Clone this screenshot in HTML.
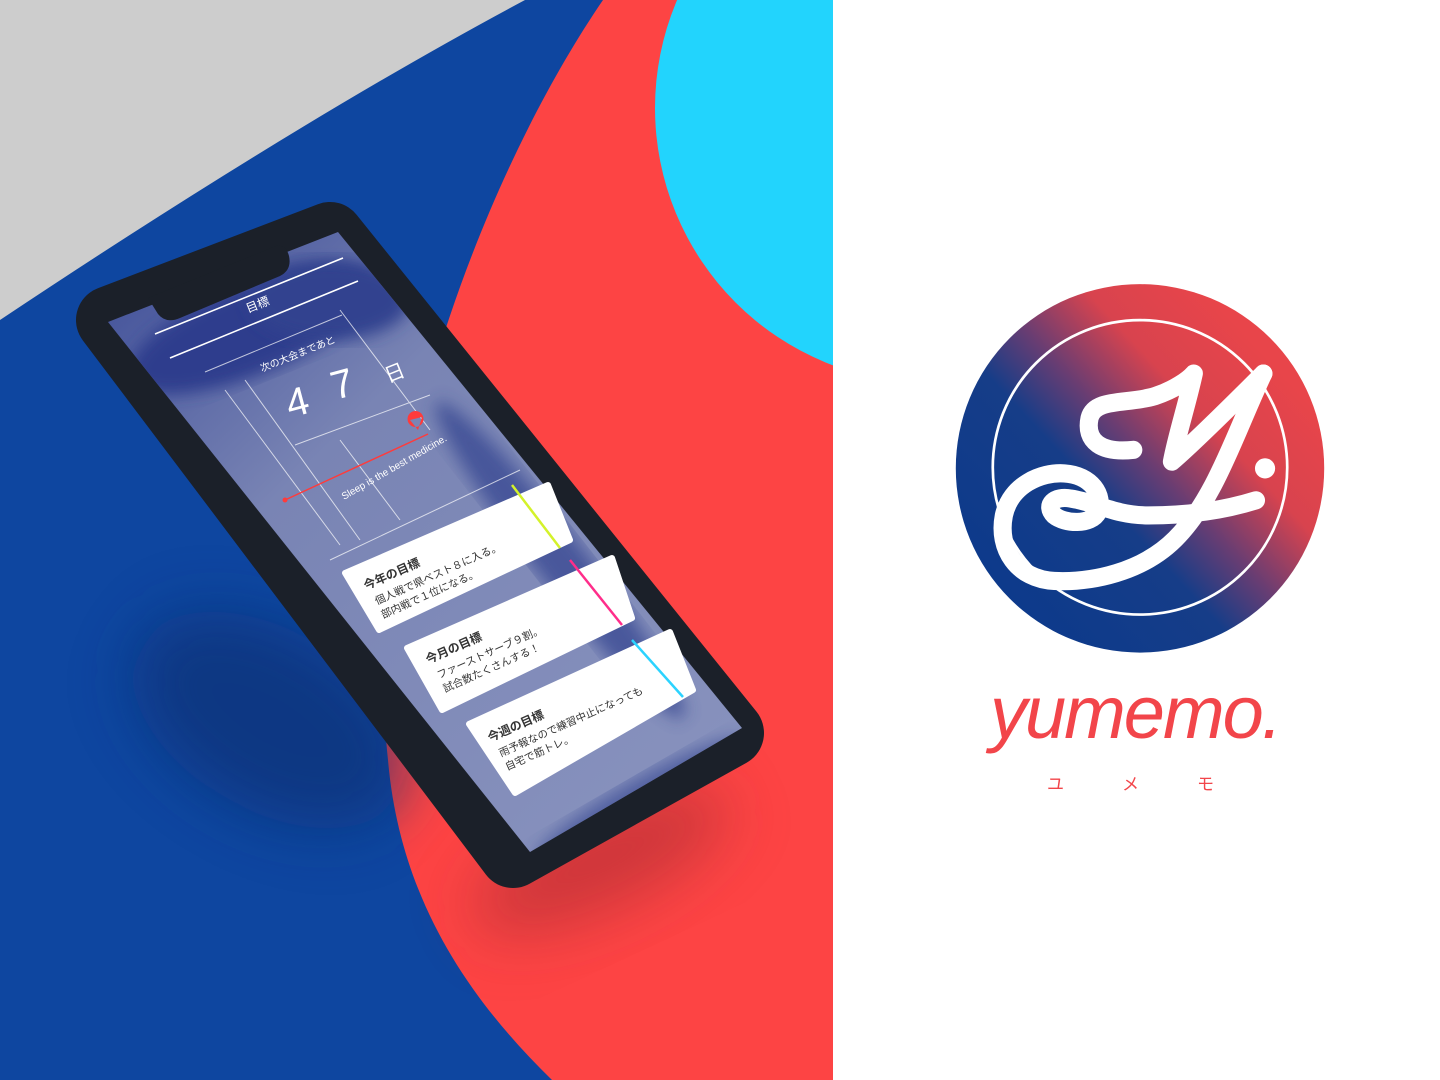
<!DOCTYPE html>
<html><head><meta charset="utf-8"><style>
html,body{margin:0;padding:0;width:1440px;height:1080px;overflow:hidden;background:#fff}
svg{position:absolute;left:0;top:0}
.jp{font-family:"Liberation Sans","Noto Sans CJK JP",sans-serif}
</style></head><body>
<svg width="1440" height="1080" viewBox="0 0 1440 1080">
<defs>
<clipPath id="lp"><rect x="0" y="0" width="833" height="1080"/></clipPath>
<linearGradient id="scr" x1="0" y1="0" x2="1" y2="1">
<stop offset="0" stop-color="#3a4a96"/><stop offset="0.35" stop-color="#7984b4"/><stop offset="1" stop-color="#8a94bf"/></linearGradient>
<clipPath id="sc"><polygon points="108,322 338,232 742,728 530,852"/></clipPath>
<filter id="b20" x="-50%" y="-50%" width="200%" height="200%"><feGaussianBlur stdDeviation="30"/></filter>
<filter id="b8"><feGaussianBlur stdDeviation="8"/></filter>
</defs>
<g clip-path="url(#lp)">
<rect x="0" y="0" width="833" height="1080" fill="#0e46a0"/>
<path d="M0,0 L525,0 Q300,120 0,320 Z" fill="#cdcdcd"/>
<path d="M603,0 C480,180 360,500 388,760 C400,900 470,1000 552,1080 L833,1080 L833,0 Z" fill="#fd4444"/>
<circle cx="930" cy="108" r="275" fill="#22d4fd"/>
<ellipse cx="270" cy="720" rx="150" ry="90" fill="#082f70" opacity="0.6" filter="url(#b20)" transform="rotate(30 270 720)"/>
<ellipse cx="600" cy="860" rx="140" ry="50" fill="#a02a30" opacity="0.5" filter="url(#b20)" transform="rotate(-25 600 860)"/>
</g>
<!-- phone body -->
<polygon points="110,320 330,236 730,733 513,854" fill="#1b2029" stroke="#1b2029" stroke-width="68" stroke-linejoin="round"/>
<!-- screen -->
<g clip-path="url(#sc)">
<rect x="100" y="220" width="660" height="640" fill="url(#scr)"/>
<ellipse cx="250" cy="330" rx="130" ry="45" fill="#2d3c8d" filter="url(#b8)" transform="rotate(-22 250 330)"/>
<ellipse cx="330" cy="300" rx="80" ry="40" fill="#33438f" filter="url(#b8)"/>
<ellipse cx="560" cy="560" rx="200" ry="25" fill="#33438f" opacity="0.7" filter="url(#b8)" transform="rotate(52 560 560)"/>
<ellipse cx="640" cy="800" rx="120" ry="20" fill="#2f3f8e" opacity="0.6" filter="url(#b8)" transform="rotate(-30 640 800)"/>
<g stroke="#fff" stroke-width="1" opacity="0.7" fill="none">
<line x1="205" y1="372" x2="342" y2="315"/>
<line x1="225" y1="390" x2="340" y2="545"/>
<line x1="245" y1="380" x2="360" y2="540"/>
<line x1="340" y1="310" x2="430" y2="430"/>
<line x1="295" y1="445" x2="430" y2="395"/>
<line x1="340" y1="440" x2="400" y2="520"/>
<line x1="330" y1="560" x2="520" y2="470"/>
</g>
</g>
<!-- notch -->
<path d="M148,298 L276,246 Q286,244 289,256 Q292,270 280,276 L180,318 Q166,324 158,314 Z" fill="#1b2029"/>
<!-- header -->
<g stroke="#fff" stroke-width="1.6">
<line x1="155" y1="334" x2="343" y2="258"/>
<line x1="170" y1="358" x2="358" y2="281"/>
</g>
<g class="jp" fill="#fff">
<text x="248" y="313" font-size="12" transform="rotate(-22 248 313)">目標</text>
<text x="262" y="372" font-size="10" transform="rotate(-22 262 372)">次の大会まであと</text>
<text x="290" y="418" font-size="40" transform="rotate(-15 290 418)">4</text>
<text x="335" y="400" font-size="40" transform="rotate(-15 335 400)">7</text>
<text x="388" y="383" font-size="20" transform="rotate(-22 388 383)">日</text>
<text x="344" y="500" font-size="10" font-family="Liberation Sans" transform="rotate(-30 344 500)">Sleep is the best medicine.</text>
</g>
<line x1="285" y1="500" x2="428" y2="434" stroke="#ff3b3b" stroke-width="1.5"/>
<circle cx="285" cy="500" r="2.5" fill="#ff3b3b"/>
<path d="M416,411 a8,8 0 1 1 -1,0 Z M410,420 L418,430 L422,417 Z" fill="#ff3b3b"/>
<!-- cards -->
<g fill="#fff" stroke="#fff" stroke-width="6" stroke-linejoin="round">
<polygon points="345,573 548,485 570,540 379,630"/>
<polygon points="407,648 612,558 632,618 442,710"/>
<polygon points="469,724 670,632 693,690 515,793"/>
</g>
<line x1="512" y1="485" x2="560" y2="548" stroke="#d4f22a" stroke-width="2.5"/>
<line x1="570" y1="560" x2="622" y2="625" stroke="#ff2d8a" stroke-width="2.5"/>
<line x1="632" y1="640" x2="683" y2="697" stroke="#2cd3ff" stroke-width="2.5"/>
<g class="jp" fill="#333" font-size="10.5">
<g transform="translate(366,590) rotate(-24)">
<text x="0" y="0" font-weight="bold" font-size="12">今年の目標</text>
<text x="4" y="18">個人戦で県ベスト８に入る。</text>
<text x="4" y="33">部内戦で１位になる。</text>
</g>
<g transform="translate(428,664) rotate(-24)">
<text x="0" y="0" font-weight="bold" font-size="12">今月の目標</text>
<text x="4" y="18">ファーストサーブ９割。</text>
<text x="4" y="33">試合数たくさんする！</text>
</g>
<g transform="translate(490,742) rotate(-24)">
<text x="0" y="0" font-weight="bold" font-size="12">今週の目標</text>
<text x="4" y="18">雨予報なので練習中止になっても</text>
<text x="4" y="33">自宅で筋トレ。</text>
</g>
</g>
</svg>

<svg style="left:940px;top:280px" width="400" height="530" viewBox="0 0 1190 1576">
<defs>
<linearGradient id="lg" x1="0.15" y1="0.85" x2="0.85" y2="0.2">
<stop offset="0" stop-color="#0d3a8b"/><stop offset="0.38" stop-color="#163d88"/><stop offset="0.55" stop-color="#6a3d72"/><stop offset="0.75" stop-color="#d8434e"/><stop offset="1" stop-color="#e8454a"/></linearGradient>
</defs>
<circle cx="595" cy="560" r="548" fill="url(#lg)"/>
<circle cx="595" cy="557" r="438" fill="none" stroke="#fff" stroke-width="8"/>
<g fill="none" stroke="#fff" stroke-width="54" stroke-linecap="round" stroke-linejoin="round">
<path d="M575,505 C480,515 430,480 445,410 C460,350 560,370 640,345 C700,325 740,295 755,278 C735,370 705,460 690,540 C760,480 900,340 962,278"/>
<path d="M962,278 C880,450 820,650 700,770 C600,870 450,900 340,895 C230,890 170,800 190,700 C210,610 300,570 370,575 C450,580 490,640 470,690 C450,730 370,725 340,700 C310,670 340,640 390,650 C460,660 520,700 620,700 C750,700 860,680 940,655"/>
</g>
<circle cx="967" cy="560" r="30" fill="#fff"/>
</svg>

<div style="position:absolute;left:990px;top:676px;font-family:'Liberation Sans',sans-serif;font-style:italic;font-size:74px;color:#f2454a;letter-spacing:-2px;line-height:1">yumemo.</div>
<div class="jp" style="position:absolute;left:1047px;top:776px;font-size:17px;color:#f2454a;line-height:1">ユ</div>
<div class="jp" style="position:absolute;left:1122px;top:776px;font-size:17px;color:#f2454a;line-height:1">メ</div>
<div class="jp" style="position:absolute;left:1197px;top:776px;font-size:17px;color:#f2454a;line-height:1">モ</div>
</body></html>
